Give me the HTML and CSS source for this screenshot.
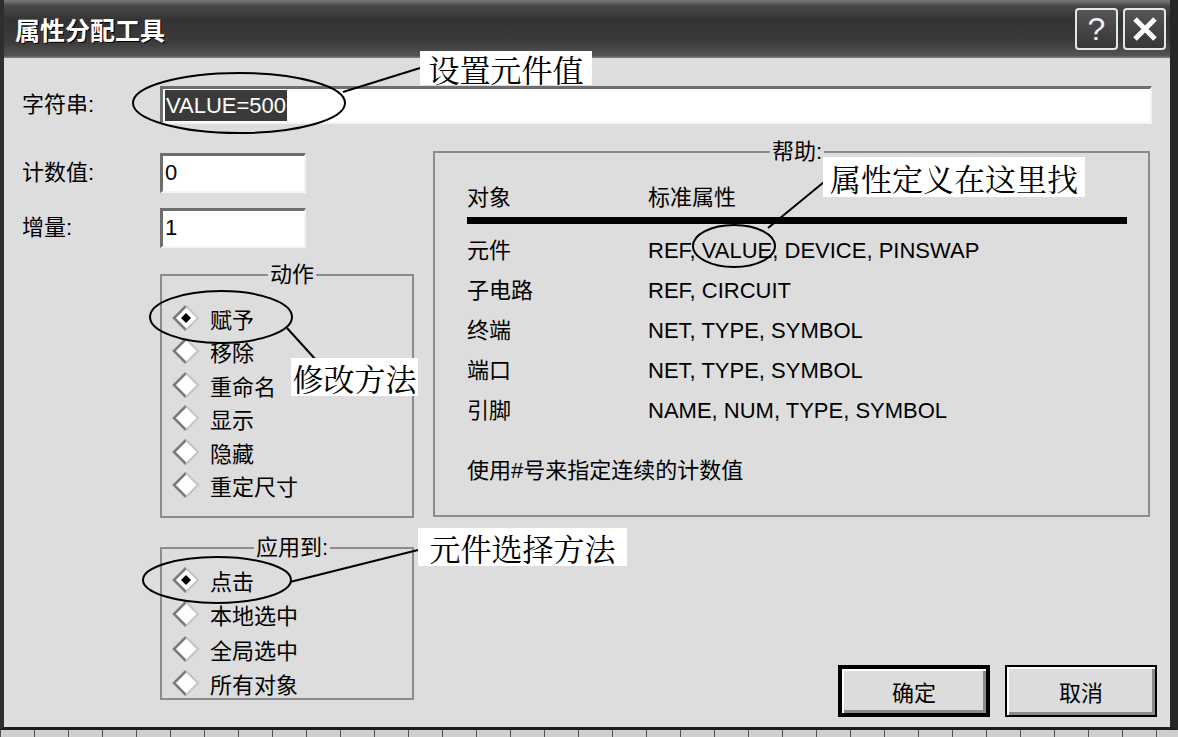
FILE: index.html
```html
<!DOCTYPE html>
<html>

<head>
    <meta charset="utf-8" />
    <title>属性分配工具</title>
    <link rel="stylesheet" href="styles.css">
</head>

<body>
    <svg class="defs" width="0" height="0">
        <symbol id="dia" viewBox="0 0 28 28">
            <polygon points="14,2 26,14 14,26 2,14" fill="#fff" />
            <polyline points="14,2 2,14 14,26" fill="none" stroke="#7a7a7a" stroke-width="2.5" />
            <polyline points="14,2 26,14 14,26" fill="none" stroke="#c4c4c4" stroke-width="2" />
        </symbol>
        <symbol id="dia-on" viewBox="0 0 28 28">
            <use href="#dia" />
            <polygon points="14,9 19,14 14,19 9,14" fill="#000" />
        </symbol>
    </svg>

    <section class="window">
        <header class="titlebar">
            <span class="title">属性分配工具</span>
            <span class="tbtn">?</span>
            <span class="tbtn">
                <svg width="28" height="28" viewBox="0 0 28 28">
                    <path d="M4 4 L24 24 M24 4 L4 24" stroke="#fff" stroke-width="5" />
                </svg>
            </span>
        </header>

        <section class="client">
            <div class="row-string">
                <label class="lbl">字符串:</label>
                <div class="field wide"><span class="sel">VALUE=500</span></div>
            </div>

            <div class="main">
                <div class="leftcol">
                    <div class="row-field">
                        <label class="lbl">计数值:</label>
                        <div class="field short">0</div>
                    </div>
                    <div class="row-field second">
                        <label class="lbl">增量:</label>
                        <div class="field short">1</div>
                    </div>

                    <fieldset class="group action">
                        <legend>动作</legend>
                        <div class="radio"><svg><use href="#dia-on" /></svg>赋予</div>
                        <div class="radio"><svg><use href="#dia" /></svg>移除</div>
                        <div class="radio"><svg><use href="#dia" /></svg>重命名</div>
                        <div class="radio"><svg><use href="#dia" /></svg>显示</div>
                        <div class="radio"><svg><use href="#dia" /></svg>隐藏</div>
                        <div class="radio"><svg><use href="#dia" /></svg>重定尺寸</div>
                    </fieldset>

                    <fieldset class="group apply">
                        <legend>应用到:</legend>
                        <div class="radio"><svg><use href="#dia-on" /></svg>点击</div>
                        <div class="radio"><svg><use href="#dia" /></svg>本地选中</div>
                        <div class="radio"><svg><use href="#dia" /></svg>全局选中</div>
                        <div class="radio"><svg><use href="#dia" /></svg>所有对象</div>
                    </fieldset>
                </div>

                <div class="rightcol">
                    <fieldset class="group help">
                        <legend>帮助:</legend>
                        <div class="help-head"><span class="c1">对象</span><span>标准属性</span></div>
                        <div class="help-row"><span class="c1">元件</span><span>REF, VALUE, DEVICE, PINSWAP</span></div>
                        <div class="help-row"><span class="c1">子电路</span><span>REF, CIRCUIT</span></div>
                        <div class="help-row"><span class="c1">终端</span><span>NET, TYPE, SYMBOL</span></div>
                        <div class="help-row"><span class="c1">端口</span><span>NET, TYPE, SYMBOL</span></div>
                        <div class="help-row"><span class="c1">引脚</span><span>NAME, NUM, TYPE, SYMBOL</span></div>
                        <p class="help-note">使用#号来指定连续的计数值</p>
                    </fieldset>

                    <div class="buttons">
                        <button class="btn default">确定</button>
                        <button class="btn">取消</button>
                    </div>
                </div>
            </div>
        </section>

        <!-- annotations drawn over the dialog -->
        <svg class="marks" width="1178" height="730">
            <ellipse cx="239" cy="103" rx="106" ry="30" />
            <line x1="343" y1="92" x2="420" y2="68" />
            <ellipse cx="221" cy="317" rx="71" ry="26" />
            <line x1="287" y1="328" x2="316" y2="360" />
            <ellipse cx="734" cy="246" rx="41" ry="21" />
            <line x1="768" y1="228" x2="824" y2="182" />
            <ellipse cx="217" cy="580" rx="74" ry="23" />
            <line x1="290" y1="582" x2="418" y2="550" />
        </svg>
        <div class="note n1">设置元件值</div>
        <div class="note n2">修改方法</div>
        <div class="note n3">属性定义在这里找</div>
        <div class="note n4">元件选择方法</div>
    </section>
    <div class="ruler"></div>
</body>

</html>
```

FILE: styles.css
```css
* {
    padding: 0;
    margin: 0;
    box-sizing: border-box;
}

body {
    width: 1178px;
    height: 737px;
    overflow: hidden;
    background-color: #2a2a2a;
    font-family: "Liberation Sans", "Noto Sans CJK SC", sans-serif;
    font-size: 22px;
    color: #000;
}

.defs {
    position: absolute;
}

.window {
    position: relative;
    display: flex;
    flex-direction: column;
    height: 730px;
    border-left: 4px solid #2e2e2e;
    border-right: 8px solid #262626;
    border-bottom: 3px solid #1c1c1c;
    background-color: #dddddd;
}

.titlebar {
    display: flex;
    align-items: center;
    gap: 5px;
    height: 58px;
    padding: 0 4px 0 11px;
    background: linear-gradient(#7a7a7a 0, #484848 6px, #333 20px, #3b3b3b 42px, #555 56px, #888 58px);
}

.title {
    flex-grow: 1;
    font-family: "Noto Sans CJK SC", sans-serif;
    font-size: 25px;
    font-weight: bold;
    color: #fff;
    text-shadow: 1px 1px 0 #000;
}

.tbtn {
    display: flex;
    justify-content: center;
    align-items: center;
    width: 43px;
    height: 42px;
    border: 2px solid #e6e6e6;
    border-radius: 4px;
    background: linear-gradient(#555, #363636);
    color: #f2f2f2;
    font-size: 32px;
    line-height: 1;
}

.client {
    flex-grow: 1;
    padding: 28px 13px 0 18px;
}

.lbl {
    display: block;
    width: 138px;
    line-height: 30px;
}

.row-string,
.row-field {
    display: flex;
    align-items: center;
}

.field {
    height: 38px;
    padding-left: 2px;
    border-top: 3px solid #6e6e6e;
    border-left: 3px solid #6e6e6e;
    border-right: 2px solid #f4f4f4;
    border-bottom: 2px solid #f4f4f4;
    background-color: #fff;
    line-height: 33px;
}

.wide {
    flex-grow: 1;
    margin-right: 5px;
}

.short {
    width: 146px;
    height: 40px;
}

.sel {
    display: inline-block;
    padding: 0 1px;
    line-height: 31px;
    background-color: #3a3a3a;
    color: #fff;
}

.main {
    display: flex;
    margin-top: 16px;
}

.leftcol {
    width: 392px;
}

.row-field {
    margin-top: 13px;
}

.row-field.second {
    margin-top: 15px;
}

.group {
    border: 2px solid #8c8c8c;
}

.group legend {
    margin: 0 auto;
    padding: 0 2px;
    line-height: 24px;
}

.action,
.apply {
    width: 254px;
    margin-left: 138px;
    padding: 14px 0 0 10px;
}

.action {
    height: 255px;
    margin-top: 15px;
}

.apply {
    height: 164px;
    margin-top: 18px;
    padding-top: 3px;
}

.radio {
    display: flex;
    align-items: center;
    height: 33.5px;
}

.apply .radio {
    height: 34.3px;
}

.radio svg {
    width: 28px;
    height: 28px;
    margin-right: 10px;
}

.rightcol {
    flex-grow: 1;
    margin-left: 19px;
}

.help {
    height: 377px;
    margin-right: 7px;
    padding: 19px 21px 0 32px;
}

.help-head,
.help-row {
    display: flex;
}

.help-head {
    line-height: 30px;
    padding-bottom: 4px;
    border-bottom: 7px solid #000;
}

.help-row {
    height: 40px;
    line-height: 40px;
}

.help-head + .help-row {
    margin-top: 7px;
}

.c1 {
    width: 181px;
}

.help-note {
    margin-top: 25px;
    line-height: 30px;
}

.buttons {
    display: flex;
    justify-content: flex-end;
    gap: 15px;
    margin-top: 148px;
}

.btn {
    width: 152px;
    height: 52px;
    border: 2px solid #000;
    background-color: #dcdcdc;
    box-shadow: inset 2px 2px 0 #fff, inset -3px -3px 0 #8a8a8a;
    font-family: "Liberation Sans", "Noto Sans CJK SC", sans-serif;
    font-size: 22px;
}

.btn.default {
    border-width: 4px;
}

.marks {
    position: absolute;
    left: -4px;
    top: 0;
    pointer-events: none;
}

.marks ellipse,
.marks line {
    fill: none;
    stroke: #000;
    stroke-width: 2;
}

.note {
    position: absolute;
    display: flex;
    justify-content: center;
    align-items: center;
    background-color: #fff;
    font-family: "Noto Serif CJK SC", "Noto Sans CJK SC", serif;
    font-size: 31px;
    line-height: 1;
}

.n1 {
    left: 416px;
    top: 51px;
    width: 172px;
    height: 34px;
}

.n2 {
    left: 287px;
    top: 358px;
    width: 127px;
    height: 38px;
}

.n3 {
    left: 819px;
    top: 157px;
    width: 262px;
    height: 40px;
}

.n4 {
    left: 414px;
    top: 528px;
    width: 209px;
    height: 38px;
}

.ruler {
    height: 7px;
    background-color: #cfcfcf;
    background-image: repeating-linear-gradient(90deg, #555 0, #555 1px, transparent 1px, transparent 34px);
}
```
